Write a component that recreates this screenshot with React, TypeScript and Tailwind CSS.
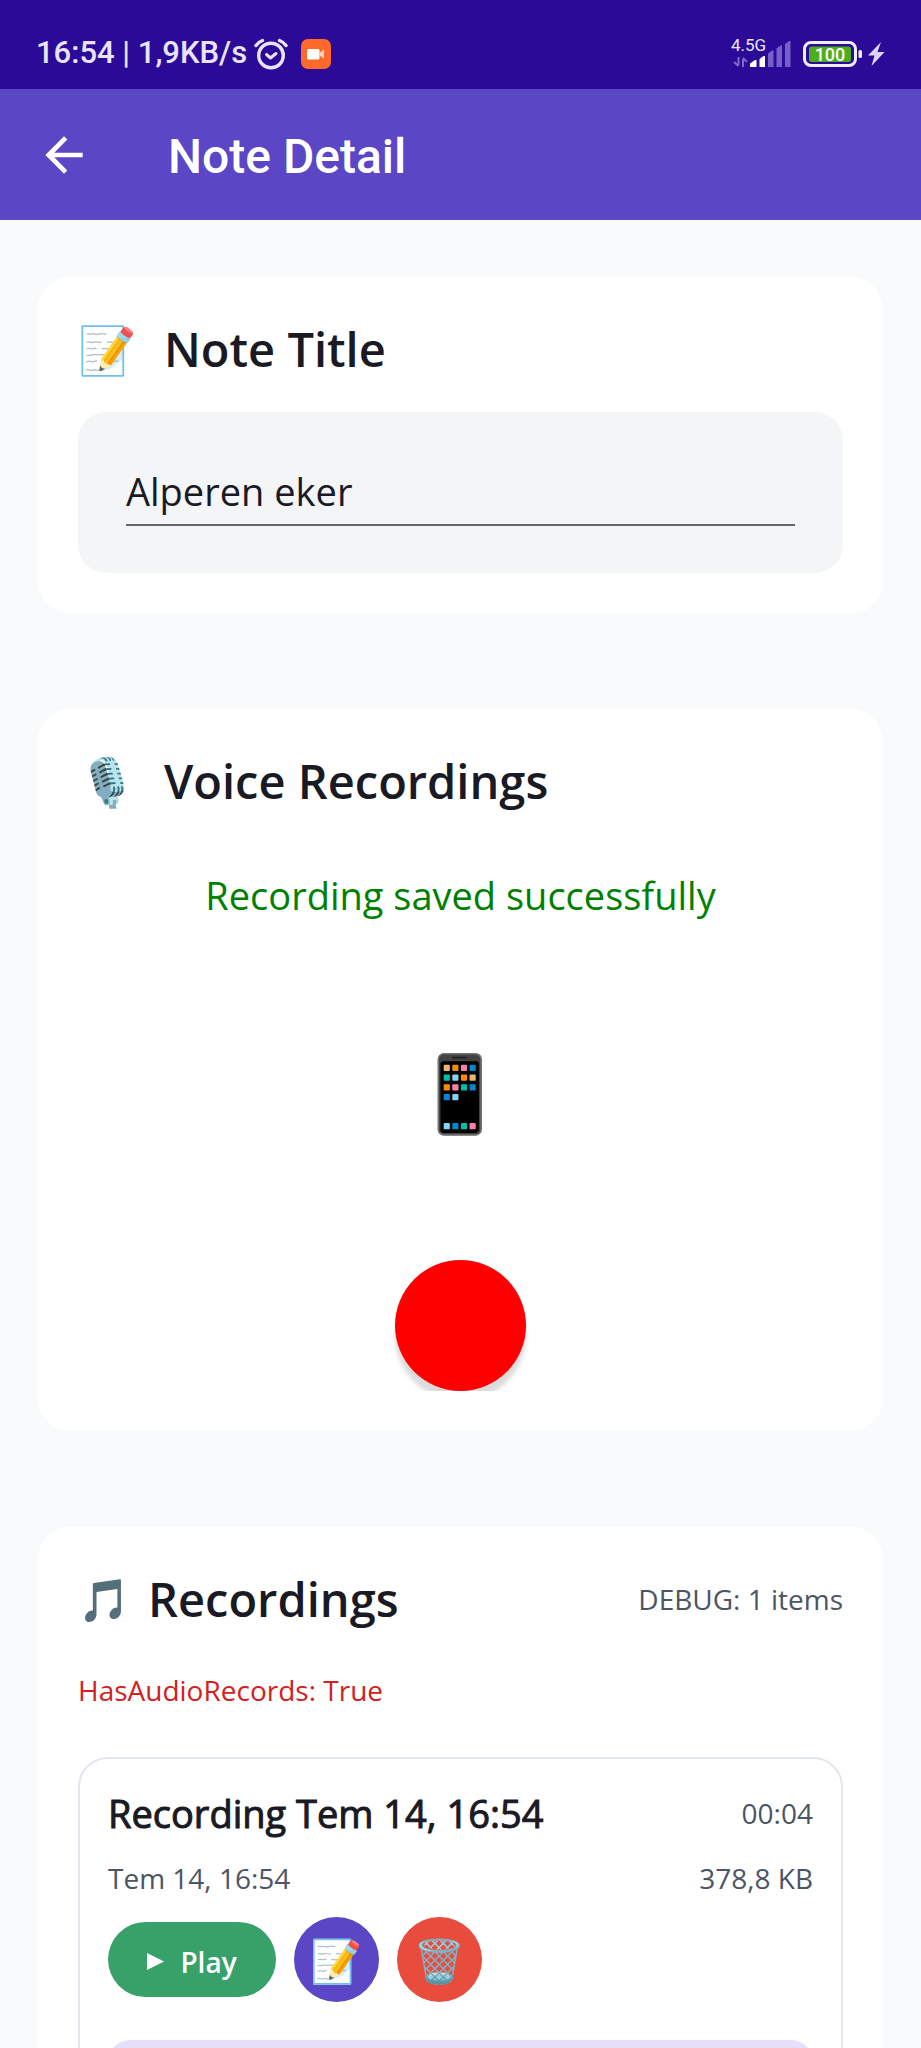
import React, { useState } from "react";

type IconProps = { className?: string };

function BackIcon({ className }: IconProps) {
  return (
    <svg viewBox="0 0 24 24" className={className} fill="#fff" aria-hidden="true">
      <path d="M20 11H7.830l5.590-5.590L12 4l-8 8 8 8 1.410-1.410L7.830 13H20v-2z" />
    </svg>
  );
}

function AlarmIcon({ className }: IconProps) {
  return (
    <svg viewBox="0 0 34 32" className={className} fill="none" stroke="#e9e3fb" strokeLinecap="round" aria-hidden="true">
      <circle cx="17" cy="17.500" r="12.300" strokeWidth="3.400" />
      <path d="M2 7.500Q4.500 4 8.500 2.500M32 7.500Q29.500 4 25.500 2.500" strokeWidth="3.400" />
      <path d="M12.500 16.500 16.500 20 22 15.500" strokeWidth="3" strokeLinejoin="round" />
    </svg>
  );
}

function RecorderBadge({ className }: IconProps) {
  return (
    <svg viewBox="0 0 30 30" className={className} aria-hidden="true">
      <rect width="30" height="30" rx="7" fill="#ff6a2b" />
      <rect x="6" y="10" width="12.500" height="10.500" rx="1.500" fill="#fff" />
      <path d="M18.500 14 23 10.500V19.500L18.500 16.500Z" fill="#ffd3bd" />
    </svg>
  );
}

function SignalIcon({ className }: IconProps) {
  return (
    <svg viewBox="0 -6 60 42" className={className} aria-hidden="true">
      <text x="0" y="12" fontSize="17" fontWeight="400" fontFamily="Roboto, sans-serif" fill="#e9e3fb">4.5G</text>
      <g fill="none" stroke="#7d69c9" strokeWidth="2">
        <path d="M7.500 18v8M3 23l4.500 4M12 28v-8M12 19l4 4" />
      </g>
      <path d="M19 28v-3.500l5-3.500h1.500v7zM28.500 28V20l4-3H34v11z" fill="#fff" />
      <path d="M37 28V14.500l4-3H42.500V28zM45.500 28V9.500l4-3H51V28zM54 28V5l4-3H59.500V28z" fill="#7460c8" />
    </svg>
  );
}

function BatteryIcon({ className }: IconProps) {
  return (
    <svg viewBox="0 0 82 28" className={className} aria-hidden="true">
      <rect x="1.500" y="2.500" width="51" height="23" rx="6.500" fill="none" stroke="#f0ebff" strokeWidth="3" />
      <rect x="6" y="6.500" width="42" height="15.500" rx="2.500" fill="#4cae1d" />
      <text x="27" y="20.500" textAnchor="middle" fontSize="18" fontWeight="500" fontFamily="Roboto, sans-serif" fill="#fff">100</text>
      <rect x="55.500" y="10" width="3.500" height="8" rx="1.500" fill="#f0ebff" />
      <path d="M78 2 65 15.500h6.500L68.500 26 81.500 12H74.500Z" fill="#ddd5f8" />
    </svg>
  );
}

function Card({ children }: { children: React.ReactNode }) {
  return <section className="rounded-[32px] bg-white p-10">{children}</section>;
}

export default function App() {
  const [title, setTitle] = useState("Alperen eker");

  return (
    <div className="flex h-screen flex-col bg-[#f9fafc] font-['Open_Sans','Noto_Color_Emoji',sans-serif] text-[#1a1a24]">
      <div className="flex h-[89px] shrink-0 items-center justify-between bg-[#2b0a97] px-9 pt-[18px] font-[Roboto,sans-serif] text-[31px] font-medium text-[#e9e3fb]">
        <div className="flex items-center">
          <span>16:54 | 1,9KB/s</span>
          <AlarmIcon className="ml-[7px] h-8 w-[34px]" />
          <RecorderBadge className="ml-[13px] h-[30px] w-[30px]" />
        </div>
        <div className="flex items-center gap-3">
          <SignalIcon className="h-[42px] w-[60px]" />
          <BatteryIcon className="h-7 w-[82px]" />
        </div>
      </div>

      <header className="flex h-[131px] shrink-0 items-center bg-[#5b46c6] px-9">
        <button type="button" aria-label="Back" className="flex">
          <BackIcon className="h-14 w-14" />
        </button>
        <h1 className="ml-[76px] pt-1 font-[Roboto,sans-serif] text-[48px] font-medium text-white">Note Detail</h1>
      </header>

      <main className="flex min-h-0 flex-1 flex-col gap-24 overflow-y-auto px-[38px] pt-[57px] [scrollbar-width:none]">
        <Card>
          <div className="flex items-center gap-7 text-[47px] leading-[64px] font-semibold">
            <span aria-hidden="true" className="w-[58px] font-normal">📝</span>
            <label htmlFor="note-title">Note Title</label>
          </div>
          <div className="mt-[31px] rounded-[28px] bg-[#f4f5f7] px-12 pt-[53px] pb-[47px]">
            <input
              id="note-title"
              value={title}
              onChange={(e) => setTitle(e.target.value)}
              className="block h-[61px] w-full border-b-2 border-[#66666c] bg-transparent pb-2 text-[38px] leading-[52px] outline-none"
            />
          </div>
        </Card>

        <Card>
          <div className="flex items-center gap-7 text-[47px] leading-[64px] font-semibold">
            <span aria-hidden="true" className="w-[58px] font-normal">🎙️</span>
            <h2>Voice Recordings</h2>
          </div>
          <div className="flex flex-col items-center">
            <p className="mt-14 text-[38px] leading-[52px] text-[#008000]">Recording saved successfully</p>
            <span role="img" aria-label="Phone" className="mt-[119px] text-[75px] leading-[102px]">📱</span>
            <div className="mt-[118px] overflow-hidden px-4">
              <button
                type="button"
                aria-label="Record"
                className="block h-[131px] w-[131px] rounded-full bg-[#ff0000] shadow-[0_10px_4px_rgba(0,0,0,0.14)]"
              />
            </div>
          </div>
        </Card>

        <Card>
          <div className="flex items-center justify-between">
            <div className="flex items-center gap-[18px]">
              <span aria-hidden="true" className="w-[52px] text-[42px] leading-[58px]">🎵</span>
              <h2 className="text-[47px] leading-[64px] font-semibold">Recordings</h2>
            </div>
            <span className="text-[28px] leading-[38px] text-[#4b5563]">DEBUG: 1 items</span>
          </div>
          <p className="mt-10 text-[28px] leading-[38px] text-[#d42020]">HasAudioRecords: True</p>

          <article className="mt-12 rounded-[30px] border-2 border-[#e2e6ee] px-7 pt-7 pb-7">
            <div className="flex items-center justify-between">
              <h3 className="text-[38px] leading-[52px] [-webkit-text-stroke:1px]">Recording Tem 14, 16:54</h3>
              <span className="text-[28px] leading-[38px] text-[#4b5563]">00:04</span>
            </div>
            <div className="mt-5 flex items-center justify-between text-[28px] leading-[38px] text-[#4b5563]">
              <span>Tem 14, 16:54</span>
              <span>378,8 KB</span>
            </div>
            <div className="mt-5 flex items-center gap-[18px]">
              <button type="button" className="flex h-[75px] w-[168px] items-center justify-center gap-4 rounded-full bg-[#38a169] pt-1 text-[28px] font-semibold text-white">
                <svg viewBox="0 0 17 17" className="h-[17px] w-[17px]" fill="#fff" aria-hidden="true">
                  <path d="M0 0 17 8.500 0 17Z" />
                </svg>
                Play
              </button>
              <button type="button" aria-label="Edit" className="flex h-[85px] w-[85px] items-center justify-center rounded-full bg-[#5b46c6] text-[42px] leading-[58px]">
                📝
              </button>
              <button type="button" aria-label="Delete" className="flex h-[85px] w-[85px] items-center justify-center rounded-full bg-[#e74c3c] text-[42px] leading-[58px]">
                🗑️
              </button>
            </div>
            <div className="mt-[38px] h-24 rounded-[22px] bg-[#e6e0fb]" />
          </article>
        </Card>
      </main>
    </div>
  );
}
